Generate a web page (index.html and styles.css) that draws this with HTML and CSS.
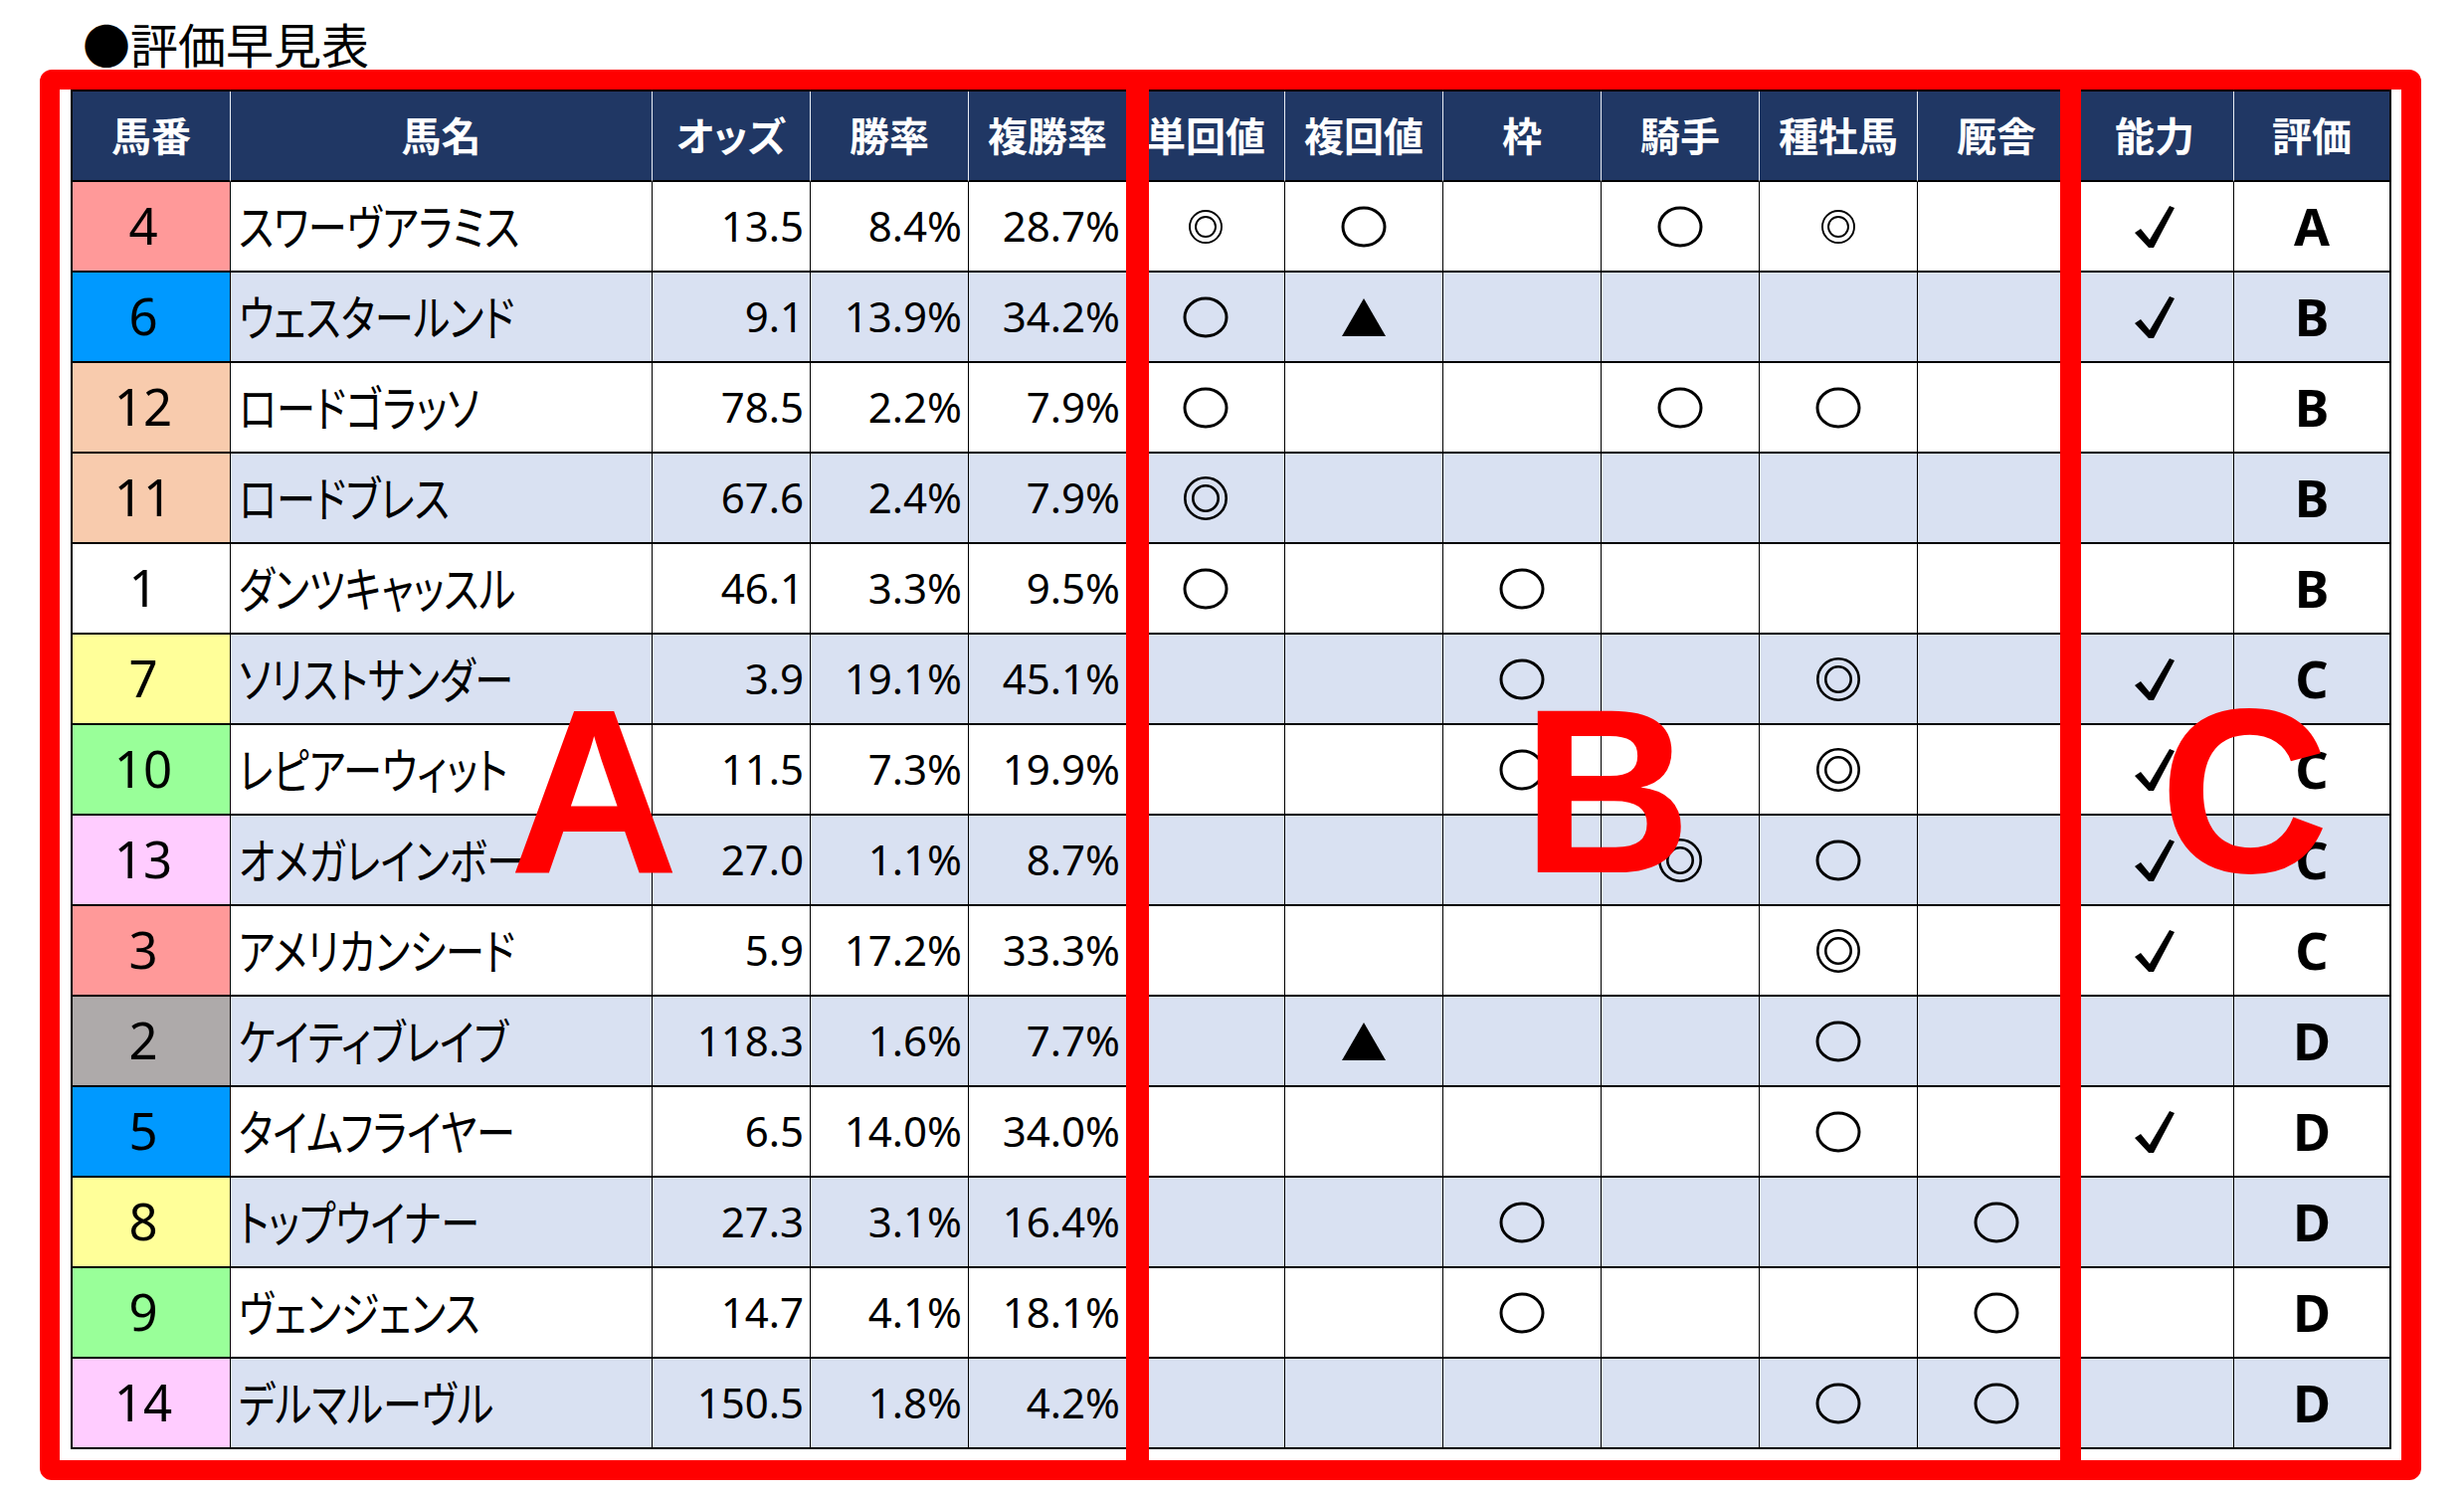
FILE: index.html
```html
<!DOCTYPE html>
<html lang="ja">
<head>
<meta charset="utf-8">
<title>評価早見表</title>
<link rel="stylesheet" href="styles.css">
</head>
<body>
<svg class="defs" width="0" height="0" aria-hidden="true">
  <defs>
    <symbol id="maru" viewBox="0 0 46 42"><ellipse cx="23" cy="21" rx="21" ry="19" fill="none" stroke="#000" stroke-width="3"/></symbol>
    <symbol id="niju" viewBox="0 0 46 46"><circle cx="23" cy="23" r="20.7" fill="none" stroke="#000" stroke-width="2.6"/><circle cx="23" cy="23" r="12.7" fill="none" stroke="#000" stroke-width="2.6"/></symbol>
    <symbol id="nijus" viewBox="0 0 36 36"><circle cx="18" cy="18" r="16" fill="none" stroke="#000" stroke-width="1.9"/><circle cx="18" cy="18" r="10" fill="none" stroke="#000" stroke-width="1.9"/></symbol>
    <symbol id="tri" viewBox="0 0 44 38"><polygon points="22,0 44,38 0,38" fill="#000"/></symbol>
    <symbol id="chk" viewBox="0 0 40 42"><polygon points="0,27 6,23 15,34 35,0 40,2 19,42 14,42" fill="#000"/></symbol>
  </defs>
</svg>
<div class="page">
  <h1 class="title">●評価早見表</h1>
  <div class="frame">
    <div class="sheet">
      <div class="row hd"><div class="c">馬番</div><div class="c">馬名</div><div class="c">オッズ</div><div class="c">勝率</div><div class="c">複勝率</div><div class="c">単回値</div><div class="c">複回値</div><div class="c">枠</div><div class="c">騎手</div><div class="c">種牡馬</div><div class="c">厩舎</div><div class="c">能力</div><div class="c">評価</div></div>

      <div class="row"><div class="c num f3">4</div><div class="c name"><span class="nm">スワーヴアラミス</span></div><div class="c val">13.5</div><div class="c val">8.4%</div><div class="c val">28.7%</div><div class="c"><svg class="i-nijus"><use href="#nijus"/></svg></div><div class="c"><svg class="i-maru"><use href="#maru"/></svg></div><div class="c"></div><div class="c"><svg class="i-maru"><use href="#maru"/></svg></div><div class="c"><svg class="i-nijus"><use href="#nijus"/></svg></div><div class="c"></div><div class="c"><svg class="i-chk"><use href="#chk"/></svg></div><div class="c ev">A</div></div>

      <div class="row alt"><div class="c num f4">6</div><div class="c name"><span class="nm">ウェスタールンド</span></div><div class="c val">9.1</div><div class="c val">13.9%</div><div class="c val">34.2%</div><div class="c"><svg class="i-maru"><use href="#maru"/></svg></div><div class="c"><svg class="i-tri"><use href="#tri"/></svg></div><div class="c"></div><div class="c"></div><div class="c"></div><div class="c"></div><div class="c"><svg class="i-chk"><use href="#chk"/></svg></div><div class="c ev">B</div></div>

      <div class="row"><div class="c num f7">12</div><div class="c name"><span class="nm">ロードゴラッソ</span></div><div class="c val">78.5</div><div class="c val">2.2%</div><div class="c val">7.9%</div><div class="c"><svg class="i-maru"><use href="#maru"/></svg></div><div class="c"></div><div class="c"></div><div class="c"><svg class="i-maru"><use href="#maru"/></svg></div><div class="c"><svg class="i-maru"><use href="#maru"/></svg></div><div class="c"></div><div class="c"></div><div class="c ev">B</div></div>

      <div class="row alt"><div class="c num f7">11</div><div class="c name"><span class="nm">ロードブレス</span></div><div class="c val">67.6</div><div class="c val">2.4%</div><div class="c val">7.9%</div><div class="c"><svg class="i-niju"><use href="#niju"/></svg></div><div class="c"></div><div class="c"></div><div class="c"></div><div class="c"></div><div class="c"></div><div class="c"></div><div class="c ev">B</div></div>

      <div class="row"><div class="c num f1">1</div><div class="c name"><span class="nm">ダンツキャッスル</span></div><div class="c val">46.1</div><div class="c val">3.3%</div><div class="c val">9.5%</div><div class="c"><svg class="i-maru"><use href="#maru"/></svg></div><div class="c"></div><div class="c"><svg class="i-maru"><use href="#maru"/></svg></div><div class="c"></div><div class="c"></div><div class="c"></div><div class="c"></div><div class="c ev">B</div></div>

      <div class="row alt"><div class="c num f5">7</div><div class="c name"><span class="nm">ソリストサンダー</span></div><div class="c val">3.9</div><div class="c val">19.1%</div><div class="c val">45.1%</div><div class="c"></div><div class="c"></div><div class="c"><svg class="i-maru"><use href="#maru"/></svg></div><div class="c"></div><div class="c"><svg class="i-niju"><use href="#niju"/></svg></div><div class="c"></div><div class="c"><svg class="i-chk"><use href="#chk"/></svg></div><div class="c ev">C</div></div>

      <div class="row"><div class="c num f6">10</div><div class="c name"><span class="nm">レピアーウィット</span></div><div class="c val">11.5</div><div class="c val">7.3%</div><div class="c val">19.9%</div><div class="c"></div><div class="c"></div><div class="c"><svg class="i-maru"><use href="#maru"/></svg></div><div class="c"></div><div class="c"><svg class="i-niju"><use href="#niju"/></svg></div><div class="c"></div><div class="c"><svg class="i-chk"><use href="#chk"/></svg></div><div class="c ev">C</div></div>

      <div class="row alt"><div class="c num f8">13</div><div class="c name"><span class="nm">オメガレインボー</span></div><div class="c val">27.0</div><div class="c val">1.1%</div><div class="c val">8.7%</div><div class="c"></div><div class="c"></div><div class="c"></div><div class="c"><svg class="i-niju"><use href="#niju"/></svg></div><div class="c"><svg class="i-maru"><use href="#maru"/></svg></div><div class="c"></div><div class="c"><svg class="i-chk"><use href="#chk"/></svg></div><div class="c ev">C</div></div>

      <div class="row"><div class="c num f3">3</div><div class="c name"><span class="nm">アメリカンシード</span></div><div class="c val">5.9</div><div class="c val">17.2%</div><div class="c val">33.3%</div><div class="c"></div><div class="c"></div><div class="c"></div><div class="c"></div><div class="c"><svg class="i-niju"><use href="#niju"/></svg></div><div class="c"></div><div class="c"><svg class="i-chk"><use href="#chk"/></svg></div><div class="c ev">C</div></div>

      <div class="row alt"><div class="c num f2">2</div><div class="c name"><span class="nm">ケイティブレイブ</span></div><div class="c val">118.3</div><div class="c val">1.6%</div><div class="c val">7.7%</div><div class="c"></div><div class="c"><svg class="i-tri"><use href="#tri"/></svg></div><div class="c"></div><div class="c"></div><div class="c"><svg class="i-maru"><use href="#maru"/></svg></div><div class="c"></div><div class="c"></div><div class="c ev">D</div></div>

      <div class="row"><div class="c num f4">5</div><div class="c name"><span class="nm">タイムフライヤー</span></div><div class="c val">6.5</div><div class="c val">14.0%</div><div class="c val">34.0%</div><div class="c"></div><div class="c"></div><div class="c"></div><div class="c"></div><div class="c"><svg class="i-maru"><use href="#maru"/></svg></div><div class="c"></div><div class="c"><svg class="i-chk"><use href="#chk"/></svg></div><div class="c ev">D</div></div>

      <div class="row alt"><div class="c num f5">8</div><div class="c name"><span class="nm">トップウイナー</span></div><div class="c val">27.3</div><div class="c val">3.1%</div><div class="c val">16.4%</div><div class="c"></div><div class="c"></div><div class="c"><svg class="i-maru"><use href="#maru"/></svg></div><div class="c"></div><div class="c"></div><div class="c"><svg class="i-maru"><use href="#maru"/></svg></div><div class="c"></div><div class="c ev">D</div></div>

      <div class="row"><div class="c num f6">9</div><div class="c name"><span class="nm">ヴェンジェンス</span></div><div class="c val">14.7</div><div class="c val">4.1%</div><div class="c val">18.1%</div><div class="c"></div><div class="c"></div><div class="c"><svg class="i-maru"><use href="#maru"/></svg></div><div class="c"></div><div class="c"></div><div class="c"><svg class="i-maru"><use href="#maru"/></svg></div><div class="c"></div><div class="c ev">D</div></div>

      <div class="row alt"><div class="c num f8">14</div><div class="c name"><span class="nm">デルマルーヴル</span></div><div class="c val">150.5</div><div class="c val">1.8%</div><div class="c val">4.2%</div><div class="c"></div><div class="c"></div><div class="c"></div><div class="c"></div><div class="c"><svg class="i-maru"><use href="#maru"/></svg></div><div class="c"><svg class="i-maru"><use href="#maru"/></svg></div><div class="c"></div><div class="c ev">D</div></div>
    </div>
    <div class="sep sep-ab"></div>
    <div class="sep sep-bc"></div>
    <span class="big big-a">A</span>
    <span class="big big-b">B</span>
    <span class="big big-c">C</span>
  </div>
</div>
</body>
</html>
```

FILE: styles.css
```css
html, body {
  margin: 0;
  padding: 0;
  background: #ffffff;
}

.defs {
  position: absolute;
  width: 0;
  height: 0;
  overflow: hidden;
}

.page {
  padding: 19px 0 0 40px;
}

.title {
  margin: 0 0 0 43px;
  height: 49px;
  font-family: "Noto Sans CJK JP", sans-serif;
  font-weight: 400;
  font-size: 48px;
  line-height: 48px;
  color: #000;
}

.frame {
  position: relative;
  margin-top: 2px;
  width: 2394px;
  box-sizing: border-box;
  border: 20px solid #ff0000;
  border-radius: 12px;
  padding: 0 10px 11px 11px;
}

.sheet {
  display: grid;
  grid-template-columns: 159px 424px repeat(10, 159px) 156px;
  grid-auto-rows: 91px;
  width: 2333px;
  box-sizing: border-box;
  border: 2px solid #000;
  border-bottom: 0;
}

.row {
  display: contents;
}

.c {
  box-sizing: border-box;
  border-right: 1px solid #000;
  border-bottom: 2px solid #000;
  display: flex;
  align-items: center;
  justify-content: center;
  background: #ffffff;
  overflow: hidden;
  color: #000;
}

.row > .c:last-child {
  border-right: 0;
}

.alt > .c {
  background: #d9e1f2;
}

.hd > .c {
  background: #203764;
  color: #ffffff;
  border-right-color: #e8ecf4;
  font-family: "Noto Sans CJK JP", sans-serif;
  font-weight: 700;
  font-size: 40px;
  line-height: 1;
  font-feature-settings: "palt";
  padding-bottom: 4px;
}

.num {
  font-family: "Noto Sans", sans-serif;
  font-size: 51px;
  line-height: 1;
  padding-right: 16px;
  padding-bottom: 2px;
}

.row > .c.f1 { background: #ffffff; }
.row > .c.f2 { background: #aeaaaa; }
.row > .c.f3 { background: #ff9999; }
.row > .c.f4 { background: #0099ff; }
.row > .c.f5 { background: #ffff99; }
.row > .c.f6 { background: #99ff99; }
.row > .c.f7 { background: #f8cbad; }
.row > .c.f8 { background: #ffccff; }

.name {
  justify-content: flex-start;
  padding-left: 8px;
  padding-bottom: 5px;
}

.nm {
  display: inline-block;
  font-family: "Noto Sans CJK JP", sans-serif;
  font-size: 49px;
  line-height: 1;
  font-feature-settings: "palt";
  white-space: nowrap;
  transform: scaleX(0.8);
  transform-origin: 0 50%;
}

.val {
  justify-content: flex-end;
  padding-right: 6px;
  padding-bottom: 2px;
  font-family: "Noto Sans", sans-serif;
  font-size: 42px;
  line-height: 1;
  white-space: nowrap;
}

.ev {
  font-family: "Noto Sans", sans-serif;
  font-weight: 700;
  font-size: 52px;
  line-height: 1;
  padding-bottom: 2px;
}

.i-maru { width: 46px; height: 42px; }
.i-niju { width: 46px; height: 46px; }
.i-nijus { width: 36px; height: 36px; }
.i-tri { width: 44px; height: 38px; }
.i-chk { width: 40px; height: 42px; }

.sep {
  position: absolute;
  top: -20px;
  bottom: -20px;
  background: #ff0000;
}

.sep-ab {
  left: 1072px;
  width: 23px;
}

.sep-bc {
  left: 2011px;
  width: 21px;
}

.big {
  position: absolute;
  top: 587px;
  font-family: "Liberation Sans", Arial, sans-serif;
  font-weight: 700;
  font-size: 236px;
  line-height: 236px;
  color: #ff0000;
}

.big-a { left: 452px; }
.big-b { left: 1470px; }
.big-c { left: 2111px; }
```
